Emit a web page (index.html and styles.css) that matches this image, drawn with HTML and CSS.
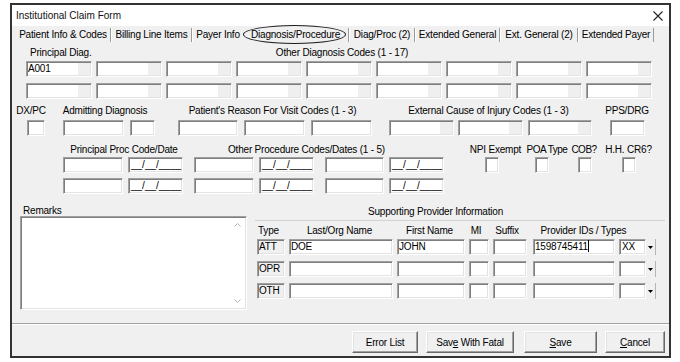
FILE: index.html
```html
<!DOCTYPE html>
<html>
<head>
<meta charset="utf-8">
<title>Institutional Claim Form</title>
<link rel="stylesheet" href="styles.css">
</head>
<body>
<div class="win">
  <div class="titlebar">
    <span class="title">Institutional Claim Form</span>
    <svg class="close" width="10" height="10" viewBox="0 0 10 10"><path d="M0.5 0.5L9.5 9.5M9.5 0.5L0.5 9.5" stroke="#222" stroke-width="1.1" fill="none"/></svg>
  </div>
  <div class="tabs">
    <div class="tab t1">Patient Info &amp; Codes</div>
    <div class="tab t2">Billing Line Items</div>
    <div class="tab t3">Payer Info</div>
    <div class="tab t4 sel">Diagnosis/Procedure<span class="ring"></span></div>
    <div class="tab t5">Diag/Proc (2)</div>
    <div class="tab t6">Extended General</div>
    <div class="tab t7">Ext. General (2)</div>
    <div class="tab t8">Extended Payer</div>
  </div>
  <div class="panel">
    <div class="lrow la">
      <span class="lpd">Principal Diag.</span>
      <span class="c lod">Other Diagnosis Codes (1 - 17)</span>
    </div>
    <div class="frow dg rb">
      <div class="f tail dgx">A001</div><div class="f tail dgx"></div><div class="f tail dgx"></div><div class="f tail dgx"></div><div class="f tail dgx"></div><div class="f tail dgx"></div><div class="f tail dgx"></div><div class="f tail dgx"></div><div class="f tail dgx"></div>
    </div>
    <div class="frow dg rc">
      <div class="f tail dgx"></div><div class="f tail dgx"></div><div class="f tail dgx"></div><div class="f tail dgx"></div><div class="f tail dgx"></div><div class="f tail dgx"></div><div class="f tail dgx"></div><div class="f tail dgx"></div><div class="f tail dgx"></div>
    </div>
    <div class="lrow ld">
      <span class="c l-dx">DX/PC</span>
      <span class="c l-adm">Admitting Diagnosis</span>
      <span class="c l-rs">Patient's Reason For Visit Codes (1 - 3)</span>
      <span class="c l-ex">External Cause of Injury Codes (1 - 3)</span>
      <span class="c l-pps">PPS/DRG</span>
    </div>
    <div class="frow re">
      <div class="f dx"></div>
      <div class="f adm1"></div>
      <div class="f adm2"></div>
      <div class="f rs1"></div>
      <div class="f rs"></div>
      <div class="f rs"></div>
      <div class="f tail ex1"></div>
      <div class="f tail ex2"></div>
      <div class="f tail ex3"></div>
      <div class="f pps"></div>
    </div>
    <div class="lrow lf">
      <span class="c l-ppc">Principal Proc Code/Date</span>
      <span class="c l-opc">Other Procedure Codes/Dates (1 - 5)</span>
      <span class="c l-npi">NPI Exempt</span>
      <span class="c l-poa">POA Type</span>
      <span class="c l-cob">COB?</span>
      <span class="c l-hh">H.H. CR6?</span>
    </div>
    <div class="frow rg">
      <div class="f pc1"></div>
      <div class="f dt">__/__/____</div>
      <div class="f pc2"></div>
      <div class="f dt">__/__/____</div>
      <div class="f pc3"></div>
      <div class="f dt">__/__/____</div>
      <div class="f cb1"></div>
      <div class="f cb2"></div>
      <div class="f cb3"></div>
      <div class="f cb4"></div>
    </div>
    <div class="frow rh">
      <div class="f pc1"></div>
      <div class="f dt">__/__/____</div>
      <div class="f pc2"></div>
      <div class="f dt">__/__/____</div>
      <div class="f pc3"></div>
      <div class="f dt">__/__/____</div>
    </div>
    <div class="bottom">
      <div class="remarks">
        <div class="rlabel">Remarks</div>
        <div class="f ta">
          <div class="sb">
            <svg width="7" height="4" viewBox="0 0 7 4"><path d="M0.5 3.5L3.5 0.5L6.5 3.5" stroke="#b4b4b4" fill="none"/></svg>
            <svg width="7" height="4" viewBox="0 0 7 4"><path d="M0.5 0.5L3.5 3.5L6.5 0.5" stroke="#b4b4b4" fill="none"/></svg>
          </div>
        </div>
      </div>
      <div class="prov">
        <div class="ptitle">Supporting Provider Information</div>
        <div class="pline"></div>
        <div class="phead">
          <span class="h ty hl">Type</span>
          <span class="h ln hc s3">Last/Org Name</span>
          <span class="h fn hc s3">First Name</span>
          <span class="h mi hc s6">MI</span>
          <span class="h sf hc s6">Suffix</span>
          <span class="h pidh hc s12">Provider IDs / Types</span>
        </div>
        <div class="prow p1">
          <div class="f ty ro">ATT</div>
          <div class="f ln">DOE</div>
          <div class="f fn">JOHN</div>
          <div class="f mi"></div>
          <div class="f sf"></div>
          <div class="f pid">1598745411<span class="caret"></span></div>
          <div class="f pt">XX</div>
          <div class="dd"><svg width="5" height="3" viewBox="0 0 5 3"><path d="M0 0H5L2.5 3Z" fill="#000"/></svg></div>
        </div>
        <div class="prow pn">
          <div class="f ty ro">OPR</div>
          <div class="f ln"></div>
          <div class="f fn"></div>
          <div class="f mi"></div>
          <div class="f sf"></div>
          <div class="f pid"></div>
          <div class="f pt"></div>
          <div class="dd"><svg width="5" height="3" viewBox="0 0 5 3"><path d="M0 0H5L2.5 3Z" fill="#000"/></svg></div>
        </div>
        <div class="prow pn">
          <div class="f ty ro">OTH</div>
          <div class="f ln"></div>
          <div class="f fn"></div>
          <div class="f mi"></div>
          <div class="f sf"></div>
          <div class="f pid"></div>
          <div class="f pt"></div>
          <div class="dd"><svg width="5" height="3" viewBox="0 0 5 3"><path d="M0 0H5L2.5 3Z" fill="#000"/></svg></div>
        </div>
      </div>
    </div>
  </div>
  <div class="btnbar">
    <div class="btn b1"><span>Error List</span></div>
    <div class="btn b2"><span>Sav<u>e</u> With Fatal</span></div>
    <div class="btn b3"><span><u>S</u>ave</span></div>
    <div class="btn b4"><span><u>C</u>ancel</span></div>
  </div>
</div>
</body>
</html>
```

FILE: styles.css
```css
* { box-sizing: border-box; }
body {
  margin: 0;
  background: #fff;
  font-family: "Liberation Sans", Arial, sans-serif;
  font-size: 10px;
  letter-spacing: -0.2px;
  color: #000;
}
.win {
  margin: 3px 0 0 10px;
  width: 661px;
  height: 355px;
  border: 2px solid #333;
  background: #f0f0f0;
  display: flex;
  flex-direction: column;
}
.titlebar {
  height: 21px;
  flex: none;
  background: #fff;
  display: flex;
  align-items: center;
  justify-content: space-between;
  padding-left: 4px;
}
.title { line-height: 21px; color: #111; letter-spacing: 0; }
.close { margin-right: 6px; }

/* tabs */
.tabs {
  height: 18px;
  flex: none;
  display: flex;
  padding: 2px 0 0 3px;
}
.tab {
  height: 14px;
  line-height: 14px;
  text-align: center;
  white-space: nowrap;
  border-left: 1px solid #fff;
  border-right: 1px solid #9a9a9a;
}
.t1 { width: 96px; border-left-color: transparent; }
.t2 { width: 81px; }
.t3 { width: 51px; border-right: none; }
.t4 { width: 106px; }
.t5 { width: 66px; }
.t6 { width: 85px; }
.t7 { width: 78px; }
.t8 { width: 76px; }
.sel { position: relative; border-left: none; }
.ring {
  position: absolute;
  left: 0;
  top: -3px;
  width: 103px;
  height: 19px;
  border: 1.5px solid #1c1c1c;
  border-radius: 50%;
}

/* panel */
.panel {
  height: 280px;
  flex: none;
  border-bottom: 1px solid #a0a0a0;
  display: flex;
  flex-direction: column;
}
.lrow { display: flex; white-space: nowrap; }
.c { display: flex; justify-content: center; white-space: nowrap; }
.frow { display: flex; height: 16px; }

.f {
  height: 16px;
  background: #fff;
  border: 1px solid;
  border-color: #a0a0a0 #fff #fff #a0a0a0;
  box-shadow: inset 1px 1px 0 #7e7e7e, inset -1px -1px 0 #e3e3e3;
  line-height: 14px;
  padding-left: 1px;
  overflow: hidden;
  white-space: nowrap;
  flex: none;
}
.tail { background: linear-gradient(to left, #efefef 13px, #fff 13px); }

.la { margin-top: 1px; height: 16px; line-height: 16px; }
.lpd { margin-left: 18px; width: 100px; }
.lod { width: 424px; }
.dg { padding-left: 14px; gap: 4px; }
.dgx { width: 66px; }
.rc { margin-top: 6px; }

.ld { margin-top: 4px; height: 16px; line-height: 16px; }
.l-dx { width: 38px; }
.l-adm { width: 110px; }
.l-rs { width: 225px; }
.l-ex { width: 207px; }
.l-pps { width: 70px; }

.re { margin-top: 1px; }
.dx { margin-left: 15px; width: 18px; }
.adm1 { margin-left: 18px; width: 61px; }
.adm2 { margin-left: 6px; width: 25px; }
.rs1 { margin-left: 23px; width: 60px; }
.rs { margin-left: 6px; width: 61px; }
.ex1 { margin-left: 17px; width: 65px; }
.ex2 { margin-left: 4px; width: 65px; }
.ex3 { margin-left: 5px; width: 64px; }
.pps { margin-left: 18px; width: 35px; }

.lf { margin-top: 7px; height: 14px; line-height: 14px; }
.l-ppc { margin-left: 51px; width: 122px; }
.l-opc { margin-left: 3px; width: 237px; }
.l-npi { margin-left: 41px; width: 59px; }
.l-poa { margin-left: 1px; width: 42px; letter-spacing: -0.5px; }
.l-cob { margin-left: 5px; width: 22px; letter-spacing: -0.5px; }
.l-hh { margin-left: 10px; width: 47px; }

.pc1 { margin-left: 51px; width: 60px; }
.pc2 { margin-left: 11px; width: 60px; }
.pc3 { margin-left: 11px; width: 59px; }
.dt { margin-left: 5px; width: 55px; padding-left: 2px; letter-spacing: 0; }
.cb1 { margin-left: 41px; width: 14px; }
.cb2 { margin-left: 36px; width: 14px; }
.cb3 { margin-left: 29px; width: 14px; }
.cb4 { margin-left: 30px; width: 14px; }
.rh { margin-top: 5px; }

/* bottom section */
.bottom { margin-top: 11px; display: flex; }
.remarks { margin-left: 8px; width: 227px; display: flex; flex-direction: column; }
.rlabel { height: 11px; line-height: 12px; padding-left: 3px; }
.ta {
  height: 94px;
  width: 227px;
  display: flex;
  justify-content: flex-end;
  padding: 0;
}
.sb {
  width: 16px;
  margin-right: 1px;
  display: flex;
  flex-direction: column;
  justify-content: space-between;
  align-items: center;
  padding: 6px 0;
}
.sb svg { display: block; }

.prov { margin-left: 8px; width: 411px; display: flex; flex-direction: column; }
.ptitle { height: 14px; line-height: 14px; padding-left: 113px; white-space: nowrap; }
.pline { height: 1px; margin: 1px 1px 0 0; background: #d2d2d2; }
.phead { margin-top: 3px; height: 14px; line-height: 14px; display: flex; white-space: nowrap; }
.h { display: flex; flex: none; }
.hl { padding-left: 1px; }
.hc { justify-content: center; }
.s3 { padding-right: 3px; }
.s6 { padding-right: 6px; }
.s12 { padding-right: 12px; }

.prow { display: flex; height: 16px; }
.p1 { margin-top: 1px; }
.pn { margin-top: 6px; }
.ty { margin-left: 2px; width: 28px; }
.ln { margin-left: 4px; width: 104px; }
.fn { margin-left: 4px; width: 68px; }
.mi { margin-left: 4px; width: 20px; }
.sf { margin-left: 4px; width: 34px; }
.pid { margin-left: 6px; width: 82px; }
.pidh { margin-left: 6px; width: 113px; }
.pt { margin-left: 4px; width: 27px; padding-left: 2px; }
.ro { background: #f0f0f0; }
.caret {
  display: inline-block;
  width: 1px;
  height: 12px;
  background: #000;
  vertical-align: -2px;
}
.dd {
  width: 10px;
  flex: none;
  display: flex;
  align-items: center;
  justify-content: center;
  border-right: 1px solid #b4b4b4;
}
.dd svg { display: block; }

/* buttons */
.btnbar {
  height: 32px;
  flex: none;
  border-top: 1px solid #fff;
  display: flex;
  padding-top: 6px;
}
.btn {
  height: 22px;
  flex: none;
  background: #f0f0f0;
  border: 1px solid;
  border-color: #fff #696969 #696969 #fff;
  box-shadow: inset -1px -1px 0 #a0a0a0, inset 1px 1px 0 #e3e3e3;
  display: flex;
  align-items: center;
  justify-content: center;
  white-space: nowrap;
}
.b1 { margin-left: 340px; width: 66px; }
.b2 { margin-left: 8px; width: 88px; }
.b3 { margin-left: 10px; width: 73px; }
.b4 { margin-left: 8px; width: 60px; }
```
